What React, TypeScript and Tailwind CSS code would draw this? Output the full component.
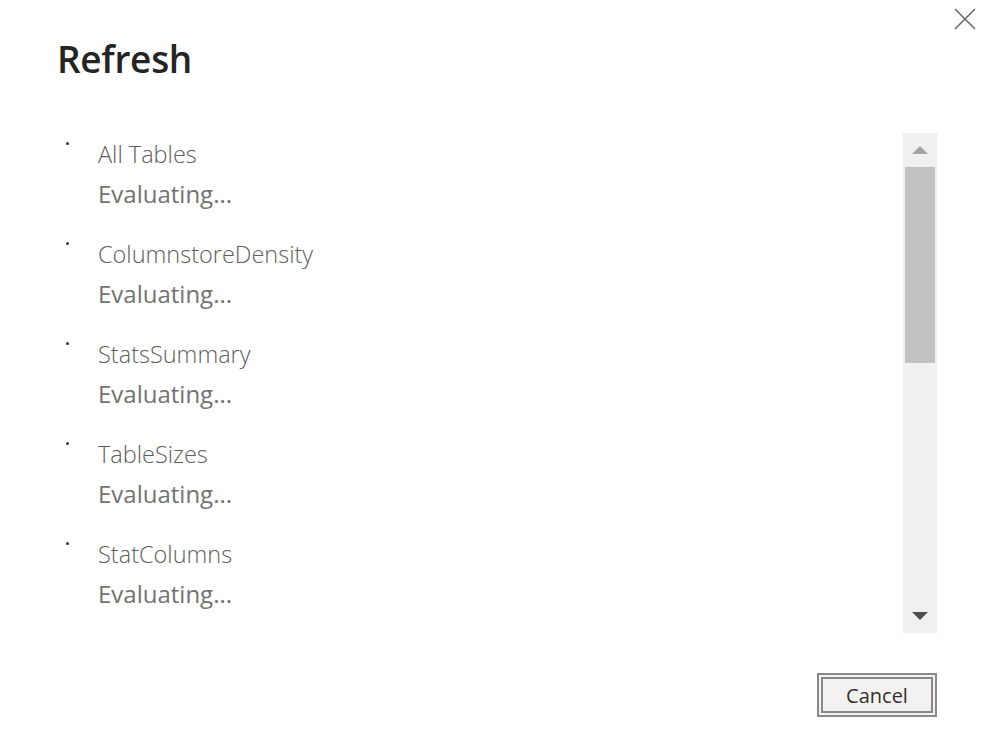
import React from "react";

const items = ["All Tables", "ColumnstoreDensity", "StatsSummary", "TableSizes", "StatColumns"];

export default function App() {
  return (
    <div
      className="relative w-[994px] h-[752px] bg-white overflow-hidden flex flex-col"
      style={{ fontFamily: '"Open Sans", "Noto Sans", sans-serif' }}
    >
      <button className="absolute left-[953px] top-[7px] w-[24px] h-[24px] flex items-center justify-center">
        <svg width="24" height="24" viewBox="0 0 24 24">
          <path d="M2 2 L22 22 M22 2 L2 22" stroke="#6b6a69" strokeWidth="1.6" fill="none" />
        </svg>
      </button>

      <div className="pl-[57px] pt-[35px] h-[133px]">
        <h1 className="text-[37px] leading-[48px] font-semibold text-[#252423] tracking-[-0.3px]">Refresh</h1>
      </div>

      <div className="flex pr-[57px]">
        <div className="flex-1 h-[500px] overflow-hidden pl-[66px] pt-[1px]">
          {items.map((name) => (
            <div key={name} className="flex mb-[20px]">
              <div className="w-[3px] h-[3px] rounded-full bg-[#3b3a39] mt-[8px] mr-[29px] shrink-0" />
              <div>
                <div className="text-[23.5px] leading-[40px] font-light text-[#605e5c]">{name}</div>
                <div className="text-[24px] leading-[40px] font-normal text-[#737271]">Evaluating...</div>
              </div>
            </div>
          ))}
        </div>
        <div className="w-[34px] h-[500px] bg-[#f0f0f0] flex flex-col items-center">
          <div className="h-[34px] w-full flex items-center justify-center">
            <svg width="16" height="8" viewBox="0 0 16 8">
              <path d="M0 8 L8 0 L16 8 Z" fill="#a3a3a3" />
            </svg>
          </div>
          <div className="w-[30px] h-[196px] bg-[#c1c1c1]" />
          <div className="flex-1" />
          <div className="h-[34px] w-full flex items-center justify-center">
            <svg width="16" height="8" viewBox="0 0 16 8">
              <path d="M0 0 L16 0 L8 8 Z" fill="#505050" />
            </svg>
          </div>
        </div>
      </div>

      <div className="flex justify-end pr-[57px] pt-[40px]">
        <button className="w-[120px] h-[44px] border-2 border-[#8a8886] bg-[#f3f2f1] p-[2px]">
          <div className="w-full h-full border-2 border-[#8a8886] flex items-center justify-center pt-[2px] text-[20px] text-[#323130]">
            Cancel
          </div>
        </button>
      </div>
    </div>
  );
}
